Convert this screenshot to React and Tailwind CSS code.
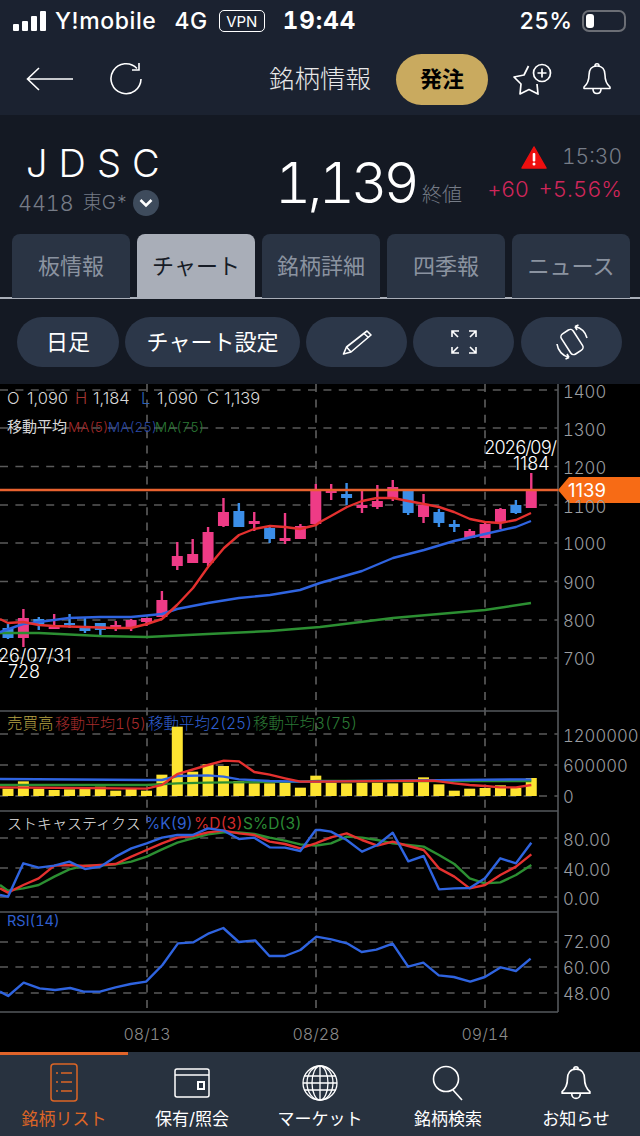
import React from "react";

const X = (i) => 8 + 15.39 * i;
const P = "#ee3b86";
const B = "#3b8ee8";
// [color, bodyTop, bodyBottom, wickTop, wickBottom]
const candles = [
  [B,628,638,624,639],[P,618,638,609,647],[B,619,624,617,630],[P,627,629,614,629],[B,623,625,614,628],
  [B,627,631,618,633],[B,623,630,623,637],[P,625,629,621,631],[P,620,627,619,631],[P,618,622,618,626],
  [P,600,617,591,617],[P,556,566,542,570],[P,554,563,539,563],[P,532,563,527,566],[P,512,526,498,527],
  [B,511,527,503,527],[P,521,524,512,531],[B,528,539,526,543],[P,538,541,513,544],[P,526,539,524,539],
  [P,490,524,484,524],[P,491,493,484,500],[B,494,498,483,505],[P,505,508,490,513],[P,501,507,485,509],
  [P,487,498,480,501],[B,491,513,491,515],[P,505,517,494,523],[B,512,523,509,527],[B,524,527,520,532],
  [P,531,538,529,538],[P,524,538,522,538],[P,509,523,508,529],[B,505,513,500,514],[P,490,508,473,508],
];
const volTops = [266,244,266,270,268,263,260,272,266,272,224,80,215,193,198,243,250,250,248,263,227,248,250,248,248,250,248,232,253,272,266,264,256,264,234];

const ma5 = "0,619 8,623 23,622 39,625 54,626 85,627 116,628 131,628 147,624 162,619 177,605 193,588 208,567 224,548 239,535 254,529 270,526 285,527 300,529 316,525 320,522 331,516 347,507 362,501 377,498 393,498 408,501 424,504 439,507 454,512 470,519 485,522 500,523 516,520 531,513";
const ma25 = "0,632 23,624 39,622 69,618 100,617 131,617 162,614 177,609 208,603 239,598 270,595 300,590 320,583 362,571 393,558 424,550 454,541 485,534 516,527 531,521";
const ma75 = "0,633 39,633 100,636 147,637 208,634 270,631 320,627 393,618 485,610 531,603";

const conv = (a, b = []) =>
  [...a.map(([x, y]) => `${x / 3},${700 + y / 3}`), ...b.map(([x, y]) => `${320 + x / 3},${700 + y / 3}`)].join(" ");

const volRed = conv([[0,262],[440,266],[486,255],[532,222],[624,195],[671,182],[717,184],[763,216],[809,224],[855,235],[901,245],[955,245]],[[0,245],[340,242],[403,250],[449,255],[495,258],[541,262],[588,262],[634,255]]);
const volBlue = conv([[0,237],[440,240],[486,240],[532,228],[624,226],[671,230],[717,238],[809,243],[901,245],[955,245]],[[0,244],[634,238]]);
const volGreen = conv([[0,255],[440,255],[532,250],[624,248],[901,245],[955,243]],[[0,243],[634,243]]);

const stK = conv([[0,585],[24,590],[70,490],[116,503],[163,497],[208,485],[255,507],[301,500],[347,470],[394,445],[440,430],[486,413],[532,405],[578,405],[624,385],[671,392],[717,417],[763,413],[809,442],[855,443],[901,453],[947,390]],[[0,390],[33,395],[80,420],[126,455],[172,435],[218,398],[265,484],[311,468],[357,568],[403,565],[449,564],[495,535],[541,475],[588,490],[634,428]]);
const stD = conv([[0,565],[24,578],[70,555],[116,535],[163,497],[208,495],[255,498],[301,495],[347,492],[394,470],[440,450],[486,430],[532,413],[578,408],[624,397],[671,392],[717,400],[763,405],[809,425],[855,432],[901,445],[947,430]],[[0,425],[33,412],[80,400],[126,420],[172,437],[218,425],[265,438],[311,450],[357,505],[403,530],[449,565],[495,555],[541,525],[588,500],[634,463]]);
const stS = conv([[0,555],[24,572],[70,565],[116,555],[163,530],[208,508],[255,497],[301,497],[347,493],[394,485],[440,470],[486,448],[532,428],[578,415],[624,403],[671,397],[717,397],[763,402],[809,413],[855,422],[901,433],[947,437]],[[0,435],[33,430],[80,410],[126,413],[172,420],[218,430],[265,435],[311,440],[357,465],[403,492],[449,535],[495,550],[541,547],[588,525],[634,495]]);

const rsi = [[0,275],[20,288],[58,248],[97,265],[135,270],[172,264],[205,275],[245,275],[283,262],[320,252],[358,245],[398,195],[436,130],[474,127],[512,100],[547,84],[585,126],[625,121],[660,168],[698,168],[736,150],[775,110],[812,118],[850,130],[886,156],[922,149],[962,131],[1000,200],[1037,188],[1075,226],[1112,231],[1152,245],[1188,231],[1227,202],[1264,213],[1300,176]]
  .map(([x, y]) => `${x / 2.45},${900 + y / 3}`).join(" ");

const priceGrid = [390, 428, 466.5, 505, 543, 581.5, 620, 658];
const otherGrid = [734, 765, 796, 838, 868, 897, 942, 967, 993];
const axis = [
  ["1400",398],["1300",436],["1200",474],["1100",513],["1000",550],["900",589],["800",627],["700",665],
  ["1200000",742],["600000",772],["0",803],["80.00",846],["40.00",876],["0.00",905],["72.00",948],["60.00",974],["48.00",1000],
];

function Chart() {
  return (
    <svg width="640" height="668" viewBox="0 384 640 668" className="block bg-black shrink-0">
      {[...priceGrid, ...otherGrid].map((y) => (
        <line key={y} x1="0" x2="558" y1={y} y2={y} stroke="#5a5a5a" strokeWidth="1.6" strokeDasharray="8 7.4" />
      ))}
      {[147, 316, 485].map((x) => (
        <line key={x} x1={x} x2={x} y1="384" y2="1012" stroke="#5e5e5e" strokeWidth="1.6" strokeDasharray="8 7.4" />
      ))}
      {[711, 811, 912, 1012].map((y) => (
        <line key={y} x1="0" x2="558" y1={y} y2={y} stroke="#55585c" strokeWidth="1.6" />
      ))}
      <line x1="558" x2="558" y1="384" y2="1012" stroke="#55585c" strokeWidth="1.6" />

      {/* price legend */}
      <text y="404" fontSize="16.5" fontWeight="300" fill="#d8d8d8" className="normal-nums">
        <tspan x="7">O</tspan><tspan x="27">1,090</tspan>
        <tspan x="75" fill="#a0332f">H</tspan><tspan x="93">1,184</tspan>
        <tspan x="141" fill="#2d62b8">L</tspan><tspan x="157">1,090</tspan>
        <tspan x="207">C</tspan><tspan x="224">1,139</tspan>
      </text>
      <text y="432" fontSize="15" fill="#d8d8d8" x="7">移動平均</text>
      <text y="432" fontSize="13.5" fontWeight="300">
        <tspan x="68" fill="#a52b2b">MA(5)</tspan>
        <tspan x="108" fill="#2b4aa8">MA(25)</tspan>
        <tspan x="155" fill="#2b7a35">MA(75)</tspan>
      </text>

      {/* candles */}
      {candles.map(([c, t, b, wt, wb], i) => (
        <g key={i}>
          <rect x={X(i) - 1.2} y={wt} width="2.4" height={wb - wt} fill={c} />
          <rect x={X(i) - 5.5} y={t} width="11" height={b - t} fill={c} />
        </g>
      ))}
      <line x1="0" x2="558" y1="490" y2="490" stroke="#e8622f" strokeWidth="2.4" />
      <polyline points={ma75} fill="none" stroke="#2c8f32" strokeWidth="2.4" strokeLinejoin="round" />
      <polyline points={ma25} fill="none" stroke="#2f64e0" strokeWidth="2.4" strokeLinejoin="round" />
      <polyline points={ma5} fill="none" stroke="#e5312f" strokeWidth="2.4" strokeLinejoin="round" />

      <text x="-2" y="662" fontSize="18" fontWeight="300" fill="#fff" className="normal-nums">26/07/31</text>
      <text x="8" y="678" fontSize="18" fontWeight="300" fill="#fff" className="normal-nums">728</text>
      <text x="484" y="454" fontSize="18" fontWeight="300" fill="#fff" textLength="73">2026/09/</text>
      <text x="513" y="470" fontSize="18" fontWeight="300" fill="#fff" className="normal-nums">1184</text>

      {/* price tag */}
      <path d="M558 490 L569 477 H640 V503 H569 Z" fill="#f76b15" />
      <text x="568" y="497" fontSize="18.5" fill="#fff" className="normal-nums">1139</text>

      {/* volume */}
      <text y="729" fontSize="15.5" fontWeight="300">
        <tspan x="7" fill="#b7a345">売買高</tspan>
        <tspan x="55" fill="#a52b2b" fontSize="15">移動平均1(5)</tspan>
        <tspan x="148" fill="#2f5fcf">移動平均2(25)</tspan>
        <tspan x="253" fill="#2b7a35">移動平均3(75)</tspan>
      </text>
      {volTops.map((t, i) => {
        const top = 700 + t / 3;
        return <rect key={i} x={X(i) - 5.5} y={top} width="11" height={796 - top} fill="#fde431" />;
      })}
      <polyline points={volGreen} fill="none" stroke="#2c8f32" strokeWidth="2.4" />
      <polyline points={volBlue} fill="none" stroke="#2f64e0" strokeWidth="2.4" />
      <polyline points={volRed} fill="none" stroke="#e5312f" strokeWidth="2.4" />

      {/* stochastics */}
      <text y="829" fontSize="15.5">
        <tspan x="7" fill="#e8e8e8" fontWeight="300" fontSize="15">ストキャスティクス</tspan>
        <tspan x="145" fill="#2f5fcf">%K(9)</tspan>
        <tspan x="194" fill="#d32b2b">%D(3)</tspan>
        <tspan x="243" fill="#2b8a35">S%D(3)</tspan>
      </text>
      <polyline points={stS} fill="none" stroke="#2c8f32" strokeWidth="2.4" strokeLinejoin="round" />
      <polyline points={stD} fill="none" stroke="#e5312f" strokeWidth="2.4" strokeLinejoin="round" />
      <polyline points={stK} fill="none" stroke="#2f64e0" strokeWidth="2.4" strokeLinejoin="round" />

      {/* RSI */}
      <text x="7" y="926" fontSize="14.5" fill="#2f5fcf">RSI(14)</text>
      <polyline points={rsi} fill="none" stroke="#2f64e0" strokeWidth="2.4" strokeLinejoin="round" />

      {axis.map(([t, y]) => (
        <text key={t + y} x="563" y={y} fontSize="16.7" fontWeight="300" fill="#9a9da1">{t}</text>
      ))}
      {[["08/13",147],["08/28",316],["09/14",485]].map(([t, x]) => (
        <text key={t} x={x} y="1040" fontSize="16" fontWeight="300" fill="#8b8b8b" textAnchor="middle">{t}</text>
      ))}
    </svg>
  );
}

const Tab = ({ label, active }) => (
  <div className={`w-[118px] h-[64px] rounded-t-lg flex items-center justify-center text-[22px] ${active ? "bg-[#a9aeb8] text-[#171c26]" : "bg-[#2a3444] text-[#8b93a0]"}`}>
    {label}
  </div>
);

const ToolBtn = ({ w, children }) => (
  <div className={`${w} h-[50px] rounded-full bg-[#2c3749] flex items-center justify-center text-white text-[22px]`}>{children}</div>
);

const NavItem = ({ label, active, children }) => (
  <div className={`w-[128px] flex flex-col items-center ${active ? "text-[#dc6526]" : "text-white"}`}>
    <div className="h-[44px] flex items-center justify-center mt-[9px]">{children}</div>
    <div className="text-[17px] mt-[2px] leading-6 whitespace-nowrap">{label}</div>
  </div>
);

const Bell = ({ w, h }) => (
  <svg width={w} height={h} viewBox="0 0 30 34" fill="none" stroke="currentColor" strokeWidth="1.6" strokeLinejoin="round">
    <path d="M15 4c-5.5 0-8 4-8 9 0 5-1.5 9-5 12v1.5h26V25c-3.5-3-5-7-5-12 0-5-2.5-9-8-9Z" />
    <path d="M13 4c0-3 4-3 4 0" />
    <path d="M11 27c0 6 8 6 8 0" />
  </svg>
);

export default function App() {
  return (
    <div className="w-[640px] h-[1136px] overflow-hidden flex flex-col bg-[#141923] text-white tabular-nums font-['Inter','Noto_Sans_CJK_JP',sans-serif]">
      {/* status + nav */}
      <div className="h-[115px] bg-[#1b2230] shrink-0 flex flex-col">
        <div className="h-[42px] flex items-center pl-[13px] pr-[14px] text-[23px] leading-none">
          <div className="flex items-end gap-[3px] h-[20px]">
            <span className="w-[6px] h-[7px] bg-white rounded-[1px]" />
            <span className="w-[6px] h-[10px] bg-white rounded-[1px]" />
            <span className="w-[6px] h-[15px] bg-white rounded-[1px]" />
            <span className="w-[6px] h-[20px] bg-white rounded-[1px]" />
          </div>
          <span className="ml-[9px] font-medium tracking-[0.6px]">Y!mobile</span>
          <span className="ml-[18px] font-medium tracking-[0.6px]">4G</span>
          <span className="ml-[11px] w-[46px] h-[22px] border-[1.5px] border-white rounded-[5px] text-[15px] flex items-center justify-center">VPN</span>
          <span className="ml-[18px] text-[24px] font-bold tracking-[1px]">19:44</span>
          <span className="ml-auto font-medium">25%</span>
          <div className="ml-[10px] w-[44px] h-[22px] border-2 border-[#6b6e75] rounded-[7px] p-[2px] flex">
            <span className="w-[8px] bg-white rounded-[3px]" />
          </div>
        </div>
        <div className="flex-1 flex items-center pl-[26px] pt-[1px]">
          <svg width="47" height="26" viewBox="0 0 47 26" fill="none" stroke="#fff" strokeWidth="1.6">
            <path d="M47 13H1.5M13 2 1.5 13 13 24" />
          </svg>
          <svg className="ml-[36px]" width="34" height="34" viewBox="0 0 34 34" fill="none" stroke="#fff" strokeWidth="1.6">
            <path d="M28 6.5A15 15 0 1 0 32 17" />
            <path d="M30 1v7h-7" />
          </svg>
          <span className="ml-[126px] text-[25.5px] font-light text-[#e8e8e8] whitespace-nowrap">銘柄情報</span>
          <div className="ml-[25px] w-[92px] h-[51px] rounded-full bg-[#c9aa5f] text-black text-[22px] font-bold flex items-center justify-center">発注</div>
          <svg className="ml-[25px]" width="40" height="33" viewBox="0 0 40 33" fill="none" stroke="#fff" strokeWidth="1.7" strokeLinejoin="round">
            <path d="M15.5 3 11 12 1 14 8 21 7 31 16 26.5 25 31 24 21" />
            <circle cx="29" cy="10" r="8.5" />
            <path d="M29 5.5v9M24.5 10h9" />
          </svg>
          <div className="ml-[29px]"><Bell w={30} h={34} /></div>
        </div>
      </div>

      {/* info */}
      <div className="h-[119px] shrink-0 flex relative">
        <div className="pl-[18px] pt-[24px]">
          <div className="pl-[8px] text-[38px] leading-[48px] tracking-[0.29em] font-light whitespace-nowrap">JDSC</div>
          <div className="flex items-center mt-[2px] text-[#767c87] text-[21.5px] leading-[28px] font-light whitespace-nowrap">
            <span>4418</span>
            <span className="ml-[9px] text-[19px]">東G*</span>
            <span className="ml-[5px] w-[26px] h-[26px] rounded-full bg-[#3e4b5c] flex items-center justify-center">
              <svg width="14" height="10" viewBox="0 0 14 10" fill="none" stroke="#fff" strokeWidth="2.6"><path d="M1.5 2 7 7.5 12.5 2" /></svg>
            </span>
          </div>
        </div>
        <div className="ml-auto flex items-end pb-[21px] mr-[178px] whitespace-nowrap">
          <span className="text-[56px] leading-[60px] font-light tracking-[-3.8px]">1,139</span>
          <span className="ml-[6px] mb-[4px] text-[20px] leading-7 text-[#767c87] font-light">終値</span>
        </div>
        <div className="absolute right-[18px] top-[27px] flex flex-col items-end">
          <div className="flex items-center h-[30px]">
            <svg width="26" height="23" viewBox="0 0 26 23">
              <path d="M13 1 25 22H1Z" fill="#ee0f0f" stroke="#ee0f0f" strokeWidth="1.5" strokeLinejoin="round" />
              <rect x="11.7" y="7" width="2.6" height="8.5" rx="1" fill="#fff" />
              <circle cx="13" cy="18" r="1.5" fill="#fff" />
            </svg>
            <span className="ml-[15px] text-[21px] font-light text-[#767c87]">15:30</span>
          </div>
          <div className="flex gap-[10px] text-[22px] leading-[34px] font-light text-[#d0265a] whitespace-nowrap">
            <span className="tracking-[-0.5px]">+60</span>
            <span>+5.56%</span>
          </div>
        </div>
      </div>

      {/* tabs */}
      <div className="shrink-0 h-[65px] border-b-2 border-[#a9aeb8] pl-[12px] flex gap-[7px]">
        <Tab label="板情報" />
        <Tab label="チャート" active />
        <Tab label="銘柄詳細" />
        <Tab label="四季報" />
        <Tab label="ニュース" />
      </div>

      {/* toolbar */}
      <div className="shrink-0 h-[85px] pl-[17px] pt-[18px] flex gap-[6px]">
        <ToolBtn w="w-[102px]">日足</ToolBtn>
        <ToolBtn w="w-[175px]">チャート設定</ToolBtn>
        <ToolBtn w="w-[101px]">
          <svg width="30" height="25" viewBox="0 0 30 25" fill="none" stroke="#fff" strokeWidth="1.6" strokeLinejoin="round">
            <path d="M25 1 29 5 9 22 1.5 24 4.5 17Z" />
            <path d="M22 3.5 26.5 7.5M4.5 17 9 22" />
          </svg>
        </ToolBtn>
        <ToolBtn w="w-[101px]">
          <svg width="26" height="24" viewBox="0 0 26 24" fill="none" stroke="#fff" strokeWidth="1.6">
            <path d="M1 7V1h7M1 1l6 6M25 7V1h-7M25 1l-6 6M1 17v6h7M1 23l6-6M25 17v6h-7M25 23l-6-6" />
          </svg>
        </ToolBtn>
        <ToolBtn w="w-[101px] ml-[1px]">
          <svg width="36" height="36" viewBox="0 0 36 36" fill="none" stroke="#fff" strokeWidth="1.6" strokeLinejoin="round">
            <rect x="11" y="6" width="14" height="24" rx="3.5" transform="rotate(-33 18 18)" />
            <path d="M21 2.5A16 16 0 0 1 33 14M21 2.5l3.5-1.5M21 2.5l2 3.5" />
            <path d="M3 20A16 16 0 0 0 15 33.5M15 33.5l-3.5 1.5M15 33.5l-2-3.5" />
          </svg>
        </ToolBtn>
      </div>

      <Chart />

      {/* bottom nav */}
      <div className="shrink-0 flex-1 bg-[#28323f] relative flex">
        <div className="absolute left-0 top-0 w-[128px] h-[3px] bg-[#e0642a]" />
        <NavItem label="銘柄リスト" active>
          <svg width="28" height="40" viewBox="0 0 28 40" fill="none" stroke="currentColor" strokeWidth="1.5">
            <rect x="1" y="1" width="26" height="37" rx="3" />
            <path d="M6 10h2M11 10h11M6 19h2M11 19h11M6 28h2M11 28h11" />
          </svg>
        </NavItem>
        <NavItem label="保有/照会">
          <svg width="36" height="32" viewBox="0 0 36 32" fill="none" stroke="currentColor" strokeWidth="1.5">
            <rect x="1" y="2" width="34" height="28" rx="2" />
            <path d="M1 8h34" />
            <rect x="24" y="15" width="6" height="7" strokeWidth="2" />
          </svg>
        </NavItem>
        <NavItem label="マーケット">
          <svg width="36" height="36" viewBox="0 0 36 36" fill="none" stroke="currentColor" strokeWidth="1.3">
            <circle cx="18" cy="18" r="17" />
            <ellipse cx="18" cy="18" rx="8" ry="17" />
            <ellipse cx="18" cy="18" rx="13" ry="17" />
            <path d="M18 1v34M2 11h32M1 18h34M2 25h32" />
          </svg>
        </NavItem>
        <NavItem label="銘柄検索">
          <svg width="32" height="36" viewBox="0 0 32 36" fill="none" stroke="currentColor" strokeWidth="1.6">
            <circle cx="14" cy="14" r="12.5" />
            <path d="M21 25 30 35" />
          </svg>
        </NavItem>
        <NavItem label="お知らせ"><Bell w={32} h={38} /></NavItem>
      </div>
    </div>
  );
}
